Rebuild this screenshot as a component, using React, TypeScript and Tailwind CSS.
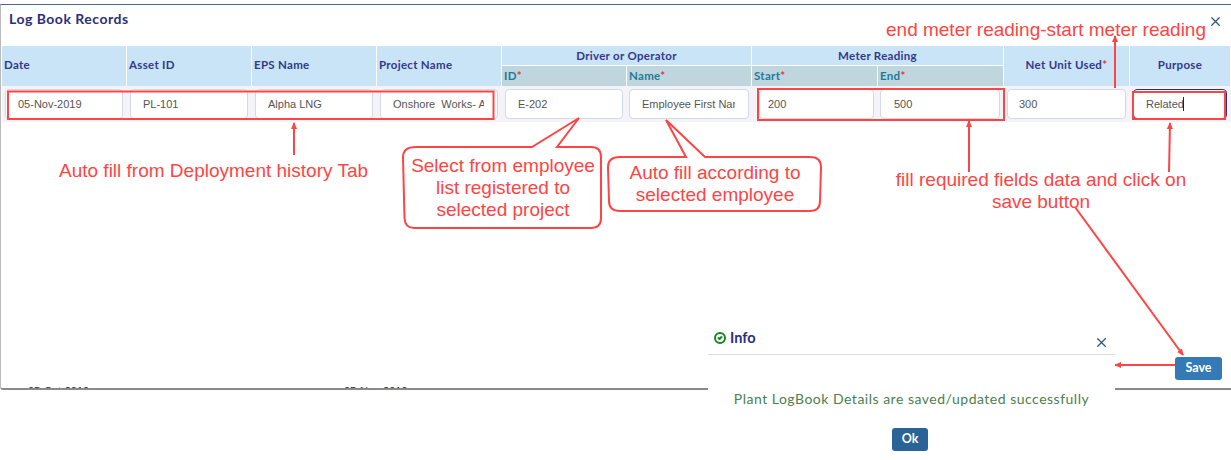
import React from 'react';
import { CircleCheck, X } from 'lucide-react';

const COLUMNS = 'grid grid-cols-[124px_124px_124px_124px_124px_124px_125px_125px_125px_100px] gap-x-px';

const Required = () => <span className="text-[#e5383b]">*</span>;

const topHeaders = [
  { label: 'Date', className: 'col-start-1' },
  { label: 'Asset ID', className: 'col-start-2' },
  { label: 'EPS Name', className: 'col-start-3' },
  { label: 'Project Name', className: 'col-start-4' },
];

const subHeaders = [
  { label: 'ID', className: 'col-start-5' },
  { label: 'Name', className: 'col-start-6' },
  { label: 'Start', className: 'col-start-7' },
  { label: 'End', className: 'col-start-8' },
];

const fields = [
  { value: '05-Nov-2019', cell: 'px-[3px]', pad: 'pl-[12px]' },
  { value: 'PL-101', cell: 'px-[3px]', pad: 'pl-[12px]' },
  { value: 'Alpha LNG', cell: 'px-[3px]', pad: 'pl-[12px]' },
  { value: 'Onshore  Works- A', cell: 'px-[3px]', pad: 'pl-[12px]' },
  { value: 'E-202', cell: 'px-[3px]', pad: 'pl-[12px]' },
  { value: 'Employee First Name', cell: 'px-[2px]', pad: 'pl-[12px]' },
  { value: '200', cell: 'pl-[7px] pr-[3px]', pad: 'pl-[8px]' },
  { value: '500', cell: 'pl-[2px] pr-[3px]', pad: 'pl-[13px]' },
  { value: '300', cell: 'px-[3px]', pad: 'pl-[11px]' },
];

const LogBookTable = () => (
  <div className="pl-px font-['Lato',sans-serif] font-bold">
    <div className={`${COLUMNS} grid-rows-[19px_20px] gap-y-px text-[11.5px] tracking-[0.3px] text-[#33398a]`}>
      {topHeaders.map(h => (
        <div key={h.label} className={`row-span-2 flex items-center bg-[#c9e3f7] pb-[2px] pl-[2px] ${h.className}`}>
          {h.label}
        </div>
      ))}
      <div className="col-start-5 col-span-2 flex items-center justify-center bg-[#c9e3f7]">Driver or Operator</div>
      <div className="col-start-7 col-span-2 flex items-center justify-center bg-[#c9e3f7]">Meter Reading</div>
      <div className="col-start-9 row-start-1 row-span-2 flex items-center justify-center bg-[#c9e3f7] pb-[2px]">
        <span>Net Unit Used<Required /></span>
      </div>
      <div className="col-start-10 row-start-1 row-span-2 flex items-center justify-center bg-[#c9e3f7] pb-[2px]">Purpose</div>
      {subHeaders.map(h => (
        <div key={h.label} className={`row-start-2 flex items-center bg-[#c0d6de] pl-[2px] text-[#1f7a99] ${h.className}`}>
          <span>{h.label}<Required /></span>
        </div>
      ))}
    </div>
    <div className={`${COLUMNS} h-[36px] items-center bg-[#f4f4f8]`}>
      {fields.map(f => (
        <div key={f.value} className={f.cell}>
          <input
            readOnly
            value={f.value}
            className={`h-[30px] w-full rounded-[4px] border border-[#d5d8e5] bg-white pr-[13px] font-['Liberation_Sans',sans-serif] text-[11px] font-normal text-[#555] outline-none ${f.pad}`}
          />
        </div>
      ))}
      <div className="relative px-[3px]">
        <input
          readOnly
          value="Related"
          className="h-[30px] w-full rounded-[4px] border border-[#2b2f7a] bg-white pl-[12px] font-['Liberation_Sans',sans-serif] text-[11px] font-normal text-[#555] outline-none"
        />
        <span className="absolute left-[53px] top-[8px] h-[14px] w-px bg-[#222]" />
      </div>
    </div>
  </div>
);

const InfoDialog = () => (
  <div className="absolute left-[708px] top-[324px] flex h-[136px] w-[407px] flex-col bg-white font-['Lato',sans-serif]">
    <div className="relative flex h-[31px] items-center gap-[4px] border-b border-[#dcdcdc] pb-[3px] pl-[6px]">
      <CircleCheck className="h-[12px] w-[12px] text-[#17851f]" strokeWidth={4} />
      <span className="text-[14.5px] font-bold text-[#2b2f7a]">Info</span>
      <X className="absolute right-[6px] top-[11px] h-[15px] w-[15px] text-[#2f5777]" strokeWidth={2} />
    </div>
    <p className="mt-[34px] text-center text-[14px] leading-[20px] tracking-[0.5px] text-[#4a8050]">
      Plant LogBook Details are saved/updated successfully
    </p>
    <div className="mt-[19px] flex justify-center pr-[3px]">
      <button className="h-[23px] w-[36px] rounded-[3px] bg-[#2a6496] text-[12.5px] font-bold text-white">
        Ok
      </button>
    </div>
  </div>
);

const Annotations = () => (
  <>
    <svg className="absolute inset-0 h-[460px] w-[1231px]" viewBox="0 0 1231 460" fill="none" stroke="#ff4444">
      <defs>
        <marker id="head" viewBox="0 0 7 7" markerWidth="3.5" markerHeight="3.5" refX="6" refY="3.5" orient="auto">
          <path d="M0 0.5 L7 3.500 L0 6.5 Z" fill="#ff4444" stroke="none" />
        </marker>
      </defs>
      <rect x="8" y="91.5" width="485.5" height="27.5" strokeWidth="2" />
      <rect x="758" y="89" width="246" height="31" strokeWidth="2" />
      <rect x="1133" y="92" width="92" height="27" strokeWidth="2" />
      <path strokeWidth="2" d="M416 147 H532 L579 118 L557 147 H591 Q601 147 601 157 L601 218 Q601 228 591 228 H414 Q405 228 404.500 218 L403 157 Q403 147 416 147 Z" />
      <path strokeWidth="2" d="M620 157 H686 L666 120 L705 157 H810 Q821 157 821 167 L820 201 Q820 211 810 211 H620 Q609 211 609 201 L608 167 Q608 157 620 157 Z" />
      <g strokeWidth="2">
        <line x1="294" y1="155" x2="294" y2="123" markerEnd="url(#head)" />
        <line x1="1115" y1="88" x2="1115" y2="36" markerEnd="url(#head)" />
        <line x1="969" y1="172" x2="969" y2="121" markerEnd="url(#head)" />
        <line x1="1169" y1="172" x2="1170" y2="123" markerEnd="url(#head)" />
        <line x1="1075" y1="207" x2="1183" y2="355" markerEnd="url(#head)" />
        <line x1="1175" y1="365" x2="1115" y2="365" markerEnd="url(#head)" />
      </g>
    </svg>
    <div className="font-['Liberation_Sans',sans-serif] text-[19px] leading-[22px] text-[#ff4444]">
      <span className="absolute left-[59px] top-[160px] whitespace-nowrap">Auto fill from Deployment history Tab</span>
      <span className="absolute left-[886px] top-[19px] whitespace-nowrap">end meter reading-start meter reading</span>
      <p className="absolute left-[403px] top-[155px] w-[200px] text-center">Select from employee list registered to selected project</p>
      <p className="absolute left-[608px] top-[162px] w-[214px] text-center">Auto fill according to selected employee</p>
      <p className="absolute left-[891px] top-[169px] w-[300px] text-center">fill required fields data and click on save button</p>
    </div>
  </>
);

export default function App() {
  return (
    <div className="relative h-[460px] w-[1231px] overflow-hidden bg-white">
      <div className="pt-[4px]">
        <div className="relative flex h-[386px] flex-col rounded-bl-[3px] border-t border-b-2 border-l border-t-[#4a6a85] border-b-[#8a8a8a] border-l-[#bbb]">
          <div className="relative flex h-[41px] items-start pl-[8px] pt-[3px]">
            <h2 className="font-['Lato',sans-serif] text-[14px] font-bold tracking-[0.5px] text-[#2b2f7a]">Log Book Records</h2>
            <X className="absolute left-[1207px] top-[9px] h-[15px] w-[15px] text-[#2f5777]" strokeWidth={2} />
          </div>
          <LogBookTable />
          <div className="mt-auto flex justify-end pb-[8px] pr-[9px]">
            <button className="h-[23px] w-[47px] rounded-[3px] bg-[#337ab7] font-['Lato',sans-serif] text-[12.5px] font-bold text-white">
              Save
            </button>
          </div>
          {/* row of the page behind the modal, only its top edge shows */}
          <div className="absolute bottom-0 left-0 h-[2px] w-full overflow-hidden font-['Liberation_Sans',sans-serif] text-[11px] leading-[11px] text-[#222]">
            <span className="absolute left-[27px] top-0">05-Oct-2019</span>
            <span className="absolute left-[343px] top-0">05-Nov-2019</span>
          </div>
        </div>
      </div>
      <Annotations />
      <InfoDialog />
    </div>
  );
}
